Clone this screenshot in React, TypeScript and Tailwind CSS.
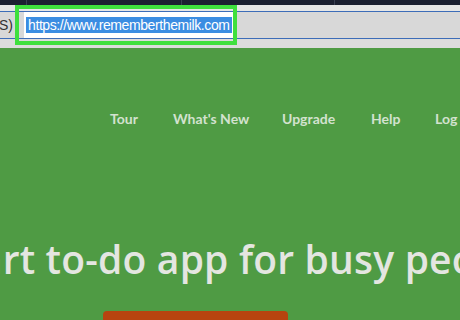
import React from "react";

const nav = [
  { label: "Tour", w: "w-[63px]" },
  { label: "What's New", w: "w-[109px]" },
  { label: "Upgrade", w: "w-[89px]" },
  { label: "Help", w: "w-[64px]" },
  { label: "Log In", w: "w-[60px]" },
];

export default function App() {
  return (
    <div className="w-[460px] h-[320px] overflow-hidden bg-[#4f9b44] font-['Lato','Open_Sans',sans-serif]">
      {/* browser chrome */}
      <div className="relative h-[48px] bg-[#dcdcdc]">
        <div className="flex h-[5px] bg-[#1c2031]">
          <div className="w-[27px] border-r border-[#3a3f52]" />
          <div className="w-[155px] border-r border-[#3a3f52]" />
          <div className="w-[153px] border-r border-[#3a3f52]" />
        </div>
        <div className="h-[6px] bg-[#e6e6e6]" />
        <div className="flex items-center h-[28px] border-y border-[#3d6db8] bg-[#d8d8d8]">
          <span className="-ml-[1px] text-[14px] text-[#333] font-['Liberation_Sans',sans-serif]">S)</span>
          <div className="ml-[11px] flex items-center h-[26px] w-[213px] bg-white pl-[2px]">
            <span className="bg-[#3b8de2] text-white text-[14px] leading-[16px] px-[2px] font-['Liberation_Sans',sans-serif] tracking-[-0.4px]">
              https://www.rememberthemilk.com
            </span>
          </div>
        </div>
        <div className="absolute left-[15px] top-[5px] w-[222px] h-[40px] border-[4px] border-[#3fe03d]" />
      </div>

      {/* site nav */}
      <div className="flex pl-[110px] pt-[60px] whitespace-nowrap">
        {nav.map((n) => (
          <span key={n.label} className={`${n.w} shrink-0 text-[14px] font-bold text-[#d3e2cf]`}>
            {n.label}
          </span>
        ))}
      </div>

      {/* hero */}
      <div className="mt-[106px] -ml-[157px] whitespace-nowrap text-[39px] leading-[48px] font-semibold tracking-[0.2px] text-[#e4e6e1] font-['Open_Sans',sans-serif]">
        The smart to-do app for busy people.
      </div>
      <div className="mt-[28px] ml-[103px] w-[185px] h-[20px] rounded-t-[4px] bg-[#b7440f]" />
    </div>
  );
}
